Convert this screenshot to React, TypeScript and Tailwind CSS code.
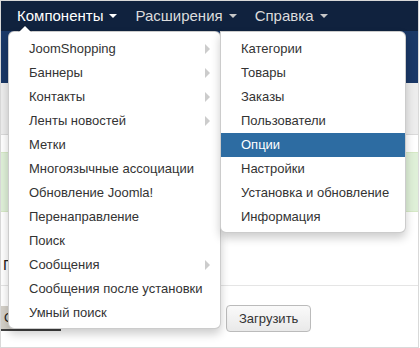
import React from 'react';

const navItems = ['Компоненты', 'Расширения', 'Справка'];

const mainMenu = [
  { label: 'JoomShopping', sub: true },
  { label: 'Баннеры', sub: true },
  { label: 'Контакты', sub: true },
  { label: 'Ленты новостей', sub: true },
  { label: 'Метки', sub: false },
  { label: 'Многоязычные ассоциации', sub: false },
  { label: 'Обновление Joomla!', sub: false },
  { label: 'Перенаправление', sub: false },
  { label: 'Поиск', sub: false },
  { label: 'Сообщения', sub: true },
  { label: 'Сообщения после установки', sub: false },
  { label: 'Умный поиск', sub: false },
];

const shopMenu = [
  'Категории',
  'Товары',
  'Заказы',
  'Пользователи',
  'Опции',
  'Настройки',
  'Установка и обновление',
  'Информация',
];

export default function App() {
  return (
    <div className="relative w-[420px] h-[348px] overflow-hidden bg-white font-['Liberation_Sans',Arial,sans-serif] text-[#333]">
      <div className="w-[419px] h-[348px] border border-[#d9d9d9] flex flex-col">
        {/* Top navbar */}
        <nav className="h-[30px] shrink-0 bg-[#10223e] flex items-center pl-[7px]">
          {navItems.map((item, i) => (
            <div
              key={item}
              className={i === 0 ? 'flex items-center px-[9px] text-[15px] text-white' : 'flex items-center px-[9px] text-[15px] text-[#dcdcdc]'}
            >
              <span>{item}</span>
              <span
                className={
                  i === 0
                    ? 'ml-[6px] w-0 h-0 border-l-[4px] border-r-[4px] border-t-[4px] border-l-transparent border-r-transparent border-t-white'
                    : 'ml-[6px] w-0 h-0 border-l-[4px] border-r-[4px] border-t-[4px] border-l-transparent border-r-transparent border-t-[#c8c8c8]'
                }
              />
            </div>
          ))}
        </nav>

        {/* Header */}
        <div className="h-[52px] shrink-0 bg-[#1a3867]" />

        {/* Subhead toolbar */}
        <div className="h-[52px] shrink-0 bg-[#ededed] border-b border-[#dadada]" />

        <div className="h-[17px] shrink-0" />

        {/* Message */}
        <div className="h-[60px] shrink-0 bg-[#dff0d8] border-y border-[#d6e9c6]" />

        {/* Legend */}
        <div className="h-[74px] shrink-0 flex items-end pb-[9px] pl-[2px] border-b border-[#e5e5e5] text-[15px] text-[#222]">
          Пакет для установки
        </div>

        {/* Upload row */}
        <div className="flex items-start pt-[19px]">
          <div className="mt-[1px] w-[60px] h-[25px] bg-[#d4d0c8] border-r-2 border-b-2 border-[#404040] flex items-center pl-[3px] text-[13px] text-[#222]">
            Обзор...
          </div>
          <button className="ml-[165px] h-[27px] px-[12px] rounded-[4px] border border-[#bbb] bg-gradient-to-b from-[#fafafa] to-[#e9e9e9] text-[13px] text-[#333]">
            Загрузить
          </button>
        </div>
      </div>

      {/* Components dropdown */}
      <div className="absolute left-[8px] top-[31px] w-[213px] pt-[5px] pb-[3px] bg-white border border-[rgba(0,0,0,0.2)] rounded-[6px] shadow-[0_5px_10px_rgba(0,0,0,0.2)]">
        <span className="absolute -top-[7px] left-[9px] w-0 h-0 border-l-[7px] border-r-[7px] border-b-[7px] border-l-transparent border-r-transparent border-b-[rgba(0,0,0,0.2)]" />
        <span className="absolute -top-[6px] left-[10px] w-0 h-0 border-l-[6px] border-r-[6px] border-b-[6px] border-l-transparent border-r-transparent border-b-white" />
        {mainMenu.map((m) => (
          <div key={m.label} className="h-[24px] px-[20px] flex items-center justify-between text-[13px] text-[#333] whitespace-nowrap">
            <span>{m.label}</span>
            {m.sub && (
              <span className="-mr-[10px] w-0 h-0 border-t-[5px] border-b-[5px] border-l-[5px] border-t-transparent border-b-transparent border-l-[#cccccc]" />
            )}
          </div>
        ))}
      </div>

      {/* JoomShopping submenu */}
      <div className="absolute left-[220px] top-[31px] w-[186px] pt-[5px] pb-[3px] bg-white border border-[rgba(0,0,0,0.2)] rounded-[0_6px_6px_6px] shadow-[0_5px_10px_rgba(0,0,0,0.2)]">
        {shopMenu.map((label) => (
          <div
            key={label}
            className={
              label === 'Опции'
                ? 'h-[24px] px-[20px] flex items-center text-[13px] text-white bg-[#2d6ca2] whitespace-nowrap'
                : 'h-[24px] px-[20px] flex items-center text-[13px] text-[#333] whitespace-nowrap'
            }
          >
            {label}
          </div>
        ))}
      </div>
    </div>
  );
}
